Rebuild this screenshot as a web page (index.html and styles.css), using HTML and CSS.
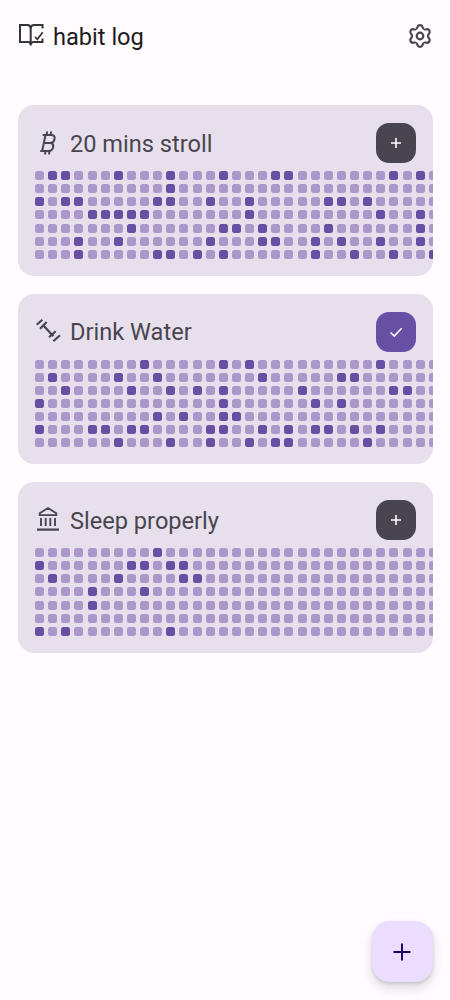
FILE: index.html
```html
<!DOCTYPE html>
<html lang="en">
<head>
<meta charset="utf-8">
<title>habit log</title>
<link rel="stylesheet" href="styles.css">
</head>
<body>
<div class="app">
  <header class="topbar">
    <div class="brand">
      <svg class="brand-icon" viewBox="0 0 24 24" fill="none" stroke="currentColor" stroke-width="2">
        <path d="M11.700 21.500V20.500C11.700 19 10.500 18 9 18H1V1H8.500C10.500 1 11.700 2.500 11.700 4.500V20.500"/>
        <path d="M11.700 4.500C11.700 2.500 13 1 15 1H23.500V4.500"/>
        <path d="M11.700 20.500C11.700 19 13 18 14.500 18H23.500V14.500"/>
        <path d="M16 12.700l2.300 2.600 5.400-7" stroke-width="1.700"/>
      </svg>
      <h1 class="brand-name">habit log</h1>
    </div>
    <svg class="gear" viewBox="0 0 24 24" fill="none" stroke="currentColor" stroke-width="2.200" stroke-linejoin="round">
      <path d="M8 5.070C8.900 4.800 9.200 3.800 9.600 2.800Q10 1.200 12 1.200Q14 1.200 14.400 2.800C14.800 3.800 15.100 4.800 16 5.070"/>
      <path transform="rotate(60 12 12)" d="M8 5.070C8.900 4.800 9.200 3.800 9.600 2.800Q10 1.200 12 1.200Q14 1.200 14.400 2.800C14.800 3.800 15.100 4.800 16 5.070"/>
      <path transform="rotate(120 12 12)" d="M8 5.070C8.900 4.800 9.200 3.800 9.600 2.800Q10 1.200 12 1.200Q14 1.200 14.400 2.800C14.800 3.800 15.100 4.800 16 5.070"/>
      <path transform="rotate(180 12 12)" d="M8 5.070C8.900 4.800 9.200 3.800 9.600 2.800Q10 1.200 12 1.200Q14 1.200 14.400 2.800C14.800 3.800 15.100 4.800 16 5.070"/>
      <path transform="rotate(240 12 12)" d="M8 5.070C8.900 4.800 9.200 3.800 9.600 2.800Q10 1.200 12 1.200Q14 1.200 14.400 2.800C14.800 3.800 15.100 4.800 16 5.070"/>
      <path transform="rotate(300 12 12)" d="M8 5.070C8.900 4.800 9.200 3.800 9.600 2.800Q10 1.200 12 1.200Q14 1.200 14.400 2.800C14.800 3.800 15.100 4.800 16 5.070"/>
      <circle cx="12" cy="12" r="3.300"/>
    </svg>
  </header>

  <main class="habits">
    <section class="card">
      <div class="card-head">
        <svg class="habit-icon" viewBox="0 0 24 24" fill="none" stroke="currentColor" stroke-width="2" stroke-linejoin="round" stroke-linecap="round">
          <path d="M10.500 4h5.700c2.500 0 3.800 1.500 3.400 3.800-.3 2-1.700 3.800-4 4.200 2 .3 2.900 1.800 2.600 3.900-.4 2.600-2.100 4.100-4.900 4.100H7.200zM9 12h6.500"/>
          <path d="M12 1.300l-.4 2.700M16 1.300L15.600 4M10.500 20l-.4 2.700M14.500 20l-.4 2.700M8.400 4h2.500M6 20h2.500"/>
        </svg>
        <h2 class="habit-name">20 mins stroll</h2>
        <button class="log-btn"><svg viewBox="0 0 24 24" fill="none" stroke="currentColor" stroke-width="1.900"><path d="M12 6v12M6 12h12"/></svg></button>
      </div>
      <div class="heatmap" data-log="1,2,6,10,14,18,19,27,29|10|0,2,3,9,10,13,16,22,23,25|4,5,6,7,8,16,26,29|7,14,15,17,22,29|3,6,13,17,18,21,23,26,29|3,9,10,12,14,21,24,27,30"></div>
    </section>

    <section class="card">
      <div class="card-head">
        <svg class="habit-icon" viewBox="0 0 24 24" fill="none" stroke="currentColor" stroke-width="2.200">
          <path d="M8.300 5.300l10 11"/>
          <path d="M1.700 4.700L7.300-.3M5 8.700L11.700 2M14 17.300l6.700-6M18.300 21.300l6.700-6"/>
        </svg>
        <h2 class="habit-name">Drink Water</h2>
        <button class="log-btn log-btn-done"><svg viewBox="0 0 24 24" fill="none" stroke="currentColor" stroke-width="1.900"><path d="M5.500 12.600l4.400 4.300 8.900-9.500"/></svg></button>
      </div>
      <div class="heatmap" data-log="8,14,16,26|1,6,9,17,23,24|2,7,10,12,14,20,27,28|0,14,21,23|9,11,14,15|0,4,5,7,8,13,14,17,19,21,22,24,26|6,10,13,16,18,19,25"></div>
    </section>

    <section class="card">
      <div class="card-head">
        <svg class="habit-icon" viewBox="0 0 24 24" fill="none" stroke="currentColor" stroke-width="2">
          <path d="M13 0L4.700 5.200V7.200H21.300V5.200z" stroke-width="1.800"/>
          <path d="M6 10v8M10.700 10v8M15.300 10v8M20 10v8" stroke-width="1.900"/>
          <path d="M2 21.700h22" stroke-width="2.200"/>
        </svg>
        <h2 class="habit-name">Sleep properly</h2>
        <button class="log-btn"><svg viewBox="0 0 24 24" fill="none" stroke="currentColor" stroke-width="1.900"><path d="M12 6v12M6 12h12"/></svg></button>
      </div>
      <div class="heatmap" data-log="9|0,7,8,10,11|1,6,11,12|4,8|4||0,2,10"></div>
    </section>
  </main>

  <button class="fab"><svg viewBox="0 0 24 24" fill="none" stroke="currentColor" stroke-width="2"><path d="M12 3.500v17M3.500 12h17"/></svg></button>
</div>
<script src="app.js"></script>
</body>
</html>
```

FILE: styles.css
```css
* { box-sizing: border-box; }

html, body {
  margin: 0;
  height: 100%;
}

body {
  background: #fffbfe;
  color: #1d1b20;
  font-family: Roboto, "Noto Sans", sans-serif;
}

.app {
  position: relative;
  height: 1000px;
  overflow: hidden;
  padding: 0 17.5px;
}

.topbar {
  display: flex;
  align-items: center;
  justify-content: space-between;
  height: 105px;
  padding: 0 1px 33px 1.5px;
}

.brand {
  display: flex;
  align-items: center;
  gap: 10px;
}

.brand-icon {
  width: 24px;
  height: 24px;
  overflow: visible;
  color: #36343b;
}

.brand-name {
  margin: 0;
  padding-top: 1px;
  font-size: 23.6px;
  font-weight: 400;
  line-height: 30px;
  color: #1d1b20;
}

.gear {
  width: 24px;
  height: 24px;
  margin-top: -1px;
  color: #49454f;
}

.habits {
  display: flex;
  flex-direction: column;
  gap: 18px;
}

.card {
  height: 170.5px;
  padding: 18px 17px 0 17.5px;
  border-radius: 16px;
  background: #e7e0ec;
  overflow: hidden;
}

.card-head {
  display: flex;
  align-items: center;
  height: 40px;
  margin-bottom: 8px;
}

.habit-icon {
  flex: none;
  width: 24px;
  height: 24px;
  margin-right: 11px;
  overflow: visible;
  color: #49454f;
}

.habit-name {
  flex: 1;
  margin: 0;
  padding-top: 1px;
  font-size: 23.6px;
  font-weight: 400;
  line-height: 30px;
  color: #49454f;
}

.log-btn {
  flex: none;
  display: flex;
  align-items: center;
  justify-content: center;
  width: 40px;
  height: 40px;
  padding: 0;
  border: 0;
  border-radius: 13px;
  background: #49454f;
  color: #fff;
}

.log-btn svg {
  width: 20px;
  height: 20px;
}

.log-btn-done {
  background: #6750a4;
}

.heatmap {
  display: grid;
  grid-auto-flow: column;
  grid-template-rows: repeat(7, 9px);
  grid-auto-columns: 9px;
  gap: 4.13px;
}

.cell {
  border-radius: 2.5px;
  background: #aa98ca;
}

.cell-on {
  background: #6750a4;
}

.fab {
  position: absolute;
  right: 17.5px;
  bottom: 18px;
  display: flex;
  align-items: center;
  justify-content: center;
  width: 61px;
  height: 61px;
  padding: 0;
  border: 0;
  border-radius: 18px;
  background: #eaddff;
  color: #21005d;
  box-shadow: 0 6px 10px 2px rgba(0, 0, 0, 0.1), 0 2px 3px rgba(0, 0, 0, 0.12);
}

.fab svg {
  width: 24px;
  height: 24px;
}
```

FILE: app.js
```js
var COLUMNS = 31;

document.querySelectorAll(".heatmap").forEach(function (map) {
  var rows = map.dataset.log.split("|").map(function (row) {
    return row === "" ? [] : row.split(",").map(Number);
  });
  for (var col = 0; col < COLUMNS; col++) {
    for (var r = 0; r < 7; r++) {
      var cell = document.createElement("span");
      cell.className = rows[r].indexOf(col) >= 0 ? "cell cell-on" : "cell";
      map.appendChild(cell);
    }
  }
});
```
